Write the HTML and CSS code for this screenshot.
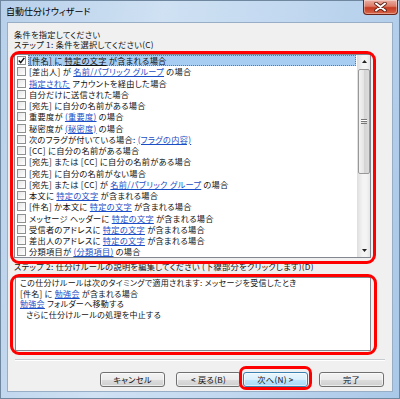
FILE: index.html
```html
<!DOCTYPE html>
<html lang="ja">
<head>
<meta charset="utf-8">
<title>自動仕分けウィザード</title>
<link rel="stylesheet" href="styles.css">
</head>
<body>
<div class="window">
  <div class="titlebar">
    <span class="title">自動仕分けウィザード</span>
    <div class="close">
      <svg width="13" height="10" viewBox="0 0 13 10"><path d="M2 1.5 L11 8.5 M11 1.5 L2 8.5" stroke="#5a1f16" stroke-width="3.6" stroke-linecap="round"/><path d="M2 1.5 L11 8.5 M11 1.5 L2 8.5" stroke="#ffffff" stroke-width="2" stroke-linecap="round"/></svg>
    </div>
  </div>
  <div class="client">
    <p class="line">条件を指定してください</p>
    <p class="line">ステップ 1: 条件を選択してください(C)</p>
    <div class="listbox">
      <ul class="rows">
        <li class="row"><span class="cb checked"><svg width="7" height="7" viewBox="0 0 7 7"><path d="M0.8 3.6 L2.7 5.6 L6.3 0.9" fill="none" stroke="#111" stroke-width="1.5"/></svg></span><span class="lbl sel">[件名] に <a>特定の文字</a> が含まれる場合</span></li>
        <li class="row"><span class="cb"></span><span class="lbl">[差出人] が <a>名前/パブリック グループ</a> の場合</span></li>
        <li class="row"><span class="cb"></span><span class="lbl"><a>指定された</a> アカウントを経由した場合</span></li>
        <li class="row"><span class="cb"></span><span class="lbl">自分だけに送信された場合</span></li>
        <li class="row"><span class="cb"></span><span class="lbl">[宛先] に自分の名前がある場合</span></li>
        <li class="row"><span class="cb"></span><span class="lbl">重要度が <a>(重要度)</a> の場合</span></li>
        <li class="row"><span class="cb"></span><span class="lbl">秘密度が <a>(秘密度)</a> の場合</span></li>
        <li class="row"><span class="cb"></span><span class="lbl">次のフラグが付いている場合: <a>(フラグの内容)</a></span></li>
        <li class="row"><span class="cb"></span><span class="lbl">[CC] に自分の名前がある場合</span></li>
        <li class="row"><span class="cb"></span><span class="lbl">[宛先] または [CC] に自分の名前がある場合</span></li>
        <li class="row"><span class="cb"></span><span class="lbl">[宛先] に自分の名前がない場合</span></li>
        <li class="row"><span class="cb"></span><span class="lbl">[宛先] または [CC] が <a>名前/パブリック グループ</a> の場合</span></li>
        <li class="row"><span class="cb"></span><span class="lbl">本文に <a>特定の文字</a> が含まれる場合</span></li>
        <li class="row"><span class="cb"></span><span class="lbl">[件名] か本文に <a>特定の文字</a> が含まれる場合</span></li>
        <li class="row"><span class="cb"></span><span class="lbl">メッセージ ヘッダーに <a>特定の文字</a> が含まれる場合</span></li>
        <li class="row"><span class="cb"></span><span class="lbl">受信者のアドレスに <a>特定の文字</a> が含まれる場合</span></li>
        <li class="row"><span class="cb"></span><span class="lbl">差出人のアドレスに <a>特定の文字</a> が含まれる場合</span></li>
        <li class="row"><span class="cb"></span><span class="lbl">分類項目が <a>(分類項目)</a> の場合</span></li>
      </ul>
      <div class="scrollbar">
        <div class="sb-btn"><svg width="5" height="3" viewBox="0 0 5 3"><path d="M0 3 L2.5 0 L5 3 Z" fill="#222"/></svg></div>
        <div class="sb-track">
          <div class="thumb"><span class="grip"></span></div>
        </div>
        <div class="sb-btn"><svg width="5" height="3" viewBox="0 0 5 3"><path d="M0 0 L5 0 L2.5 3 Z" fill="#222"/></svg></div>
      </div>
    </div>
    <p class="line step2">ステップ 2: 仕分けルールの説明を編集してください (下線部分をクリックします)(D)</p>
    <div class="desc">
      <p>この仕分けルールは次のタイミングで適用されます: メッセージを受信したとき</p>
      <p>[件名] に <a>勉強会</a> が含まれる場合</p>
      <p><a>勉強会</a> フォルダーへ移動する</p>
      <p class="indent">さらに仕分けルールの処理を中止する</p>
    </div>
    <div class="sep"></div>
    <div class="buttons">
      <button class="btn gap-lg">キャンセル</button>
      <button class="btn gap-sm">&lt; 戻る(B)</button>
      <button class="btn default gap-lg">次へ(N) &gt;</button>
      <button class="btn">完了</button>
    </div>
    <div class="hl hl-list"></div>
    <div class="hl hl-desc"></div>
    <div class="hl hl-next"></div>
  </div>
</div>
</body>
</html>
```

FILE: styles.css
```css
* { box-sizing: border-box; margin: 0; padding: 0; }
html, body { width: 400px; height: 399px; overflow: hidden; }
body {
  font-family: "Noto Sans CJK JP", "Noto Sans", sans-serif;
  font-size: 8.2px;
  letter-spacing: 0.3px;
  color: #111;
  background: #c6daf0;
  font-feature-settings: "palt";
}
a {
  color: #1b4ec6;
  text-decoration: underline;
  text-underline-offset: 1px;
}

.window {
  width: 400px;
  height: 399px;
  display: flex;
  flex-direction: column;
  border: 1px solid #6f879f;
  padding: 0 6px 6px;
  background: linear-gradient(100deg, #b8d0ea 0%, #cfe1f3 35%, #c3d9f0 60%, #aac8e8 100%);
}
.titlebar {
  height: 21px;
  display: flex;
  justify-content: space-between;
  align-items: flex-start;
}
.title {
  margin: 5px 0 0 -1px;
  font-size: 9px;
  letter-spacing: 0;
  line-height: 11px;
  color: #000;
}
.close {
  width: 35px;
  height: 15px;
  margin: -1px -5px 0 0;
  display: flex;
  align-items: center;
  justify-content: center;
  border: 1px solid #6b2419;
  border-top: none;
  border-radius: 0 0 4px 4px;
  background: linear-gradient(#eab0a4 0%, #dc7a66 45%, #c53b22 55%, #d8664a 100%);
  box-shadow: inset 0 0 0 1px rgba(255,255,255,0.35);
}

.client {
  flex: 1;
  position: relative;
  background: #f0f0f0;
  border: 1px solid #98adc6;
  padding: 5.5px 8px 0 6px;
  display: flex;
  flex-direction: column;
}
.line { line-height: 10.5px; white-space: nowrap; }
.step2 { margin-top: 3px; line-height: 10px; }

.listbox {
  margin-top: 4.5px;
  width: 357px;
  height: 204px;
  border: 1px solid #828790;
  background: #fff;
  display: flex;
}
.rows { list-style: none; flex: 1; min-width: 0; }
.row {
  height: 11.25px;
  display: flex;
  align-items: center;
  padding-left: 2px;
  white-space: nowrap;
}
.cb {
  width: 9px;
  height: 9px;
  border: 1px solid #8e8f8f;
  background: linear-gradient(135deg, #e6e6e6, #ffffff);
  margin-right: 2px;
  flex: none;
  display: flex;
  align-items: center;
  justify-content: center;
}
.cb.checked { background: #fff; }
.lbl {
  line-height: 9px;
  padding: 0 1px;
}
.lbl.sel {
  flex: 1;
  align-self: stretch;
  margin-right: 1px;
  padding: 0;
  display: flex;
  align-items: center;
  white-space: pre;
  background: #a8cdf2;
  border: 1px dotted #6a7580;
}
.lbl.sel a { color: #111; }

.scrollbar {
  width: 13px;
  flex: none;
  display: flex;
  flex-direction: column;
  background: linear-gradient(90deg, #e3e3e3, #f4f4f4 40%, #f4f4f4 70%, #e6e6e6);
  border-left: 1px solid #e0e0e0;
}
.sb-btn {
  height: 13px;
  display: flex;
  align-items: center;
  justify-content: center;
}
.sb-track { flex: 1; padding-top: 1px; }
.thumb {
  height: 105px;
  border: 1px solid #989898;
  border-radius: 2px;
  background: linear-gradient(90deg, #f2f2f2, #e6e6e6 45%, #d4d4d4 55%, #dcdcdc);
  display: flex;
  align-items: center;
  justify-content: center;
}
.grip {
  width: 6px;
  height: 5px;
  border-top: 1px solid #777;
  border-bottom: 1px solid #777;
  background: linear-gradient(#fff 0 1px, #777 1px 2px, transparent 2px);
}

.desc {
  margin: 6px 0 0 1px;
  width: 356px;
  height: 74px;
  border: 1px solid #828790;
  background: #fff;
  padding: 0 4px;
  font-size: 8px;
}
.desc p { line-height: 10.5px; white-space: nowrap; }
.desc .indent { padding-left: 6px; }

.sep {
  margin: 8px 0 0 1px;
  width: 370px;
  border-top: 1px solid #c7ccd1;
  border-bottom: 1px solid #ffffff;
}

.buttons {
  margin-top: 11px;
  display: flex;
  justify-content: flex-end;
}
.btn {
  width: 65px;
  height: 15px;
  font-family: inherit;
  font-size: 8.2px;
  letter-spacing: 0.3px;
  line-height: 13px;
  color: #111;
  border: 1px solid #707070;
  border-radius: 3px;
  background: linear-gradient(#f3f3f3 0%, #ebebeb 50%, #dddddd 51%, #cfcfcf 100%);
  box-shadow: inset 0 0 0 1px rgba(255,255,255,0.6);
  font-feature-settings: "palt";
}
.btn.default {
  border-color: #3c7fb1;
  background: linear-gradient(#eaf6fd 0%, #d9f0fc 50%, #bee6fd 51%, #a7d9f5 100%);
}
.gap-lg { margin-right: 11px; }
.gap-sm { margin-right: 2px; }

.hl {
  position: absolute;
  border: 3px solid #ff0000;
  border-radius: 9px;
  pointer-events: none;
}
.hl-list { left: 2px; top: 28px; width: 366px; height: 213px; }
.hl-desc { left: 2px; top: 251px; width: 367px; height: 81px; }
.hl-next { left: 231px; top: 343px; width: 73px; height: 24px; border-radius: 7px; }
```
